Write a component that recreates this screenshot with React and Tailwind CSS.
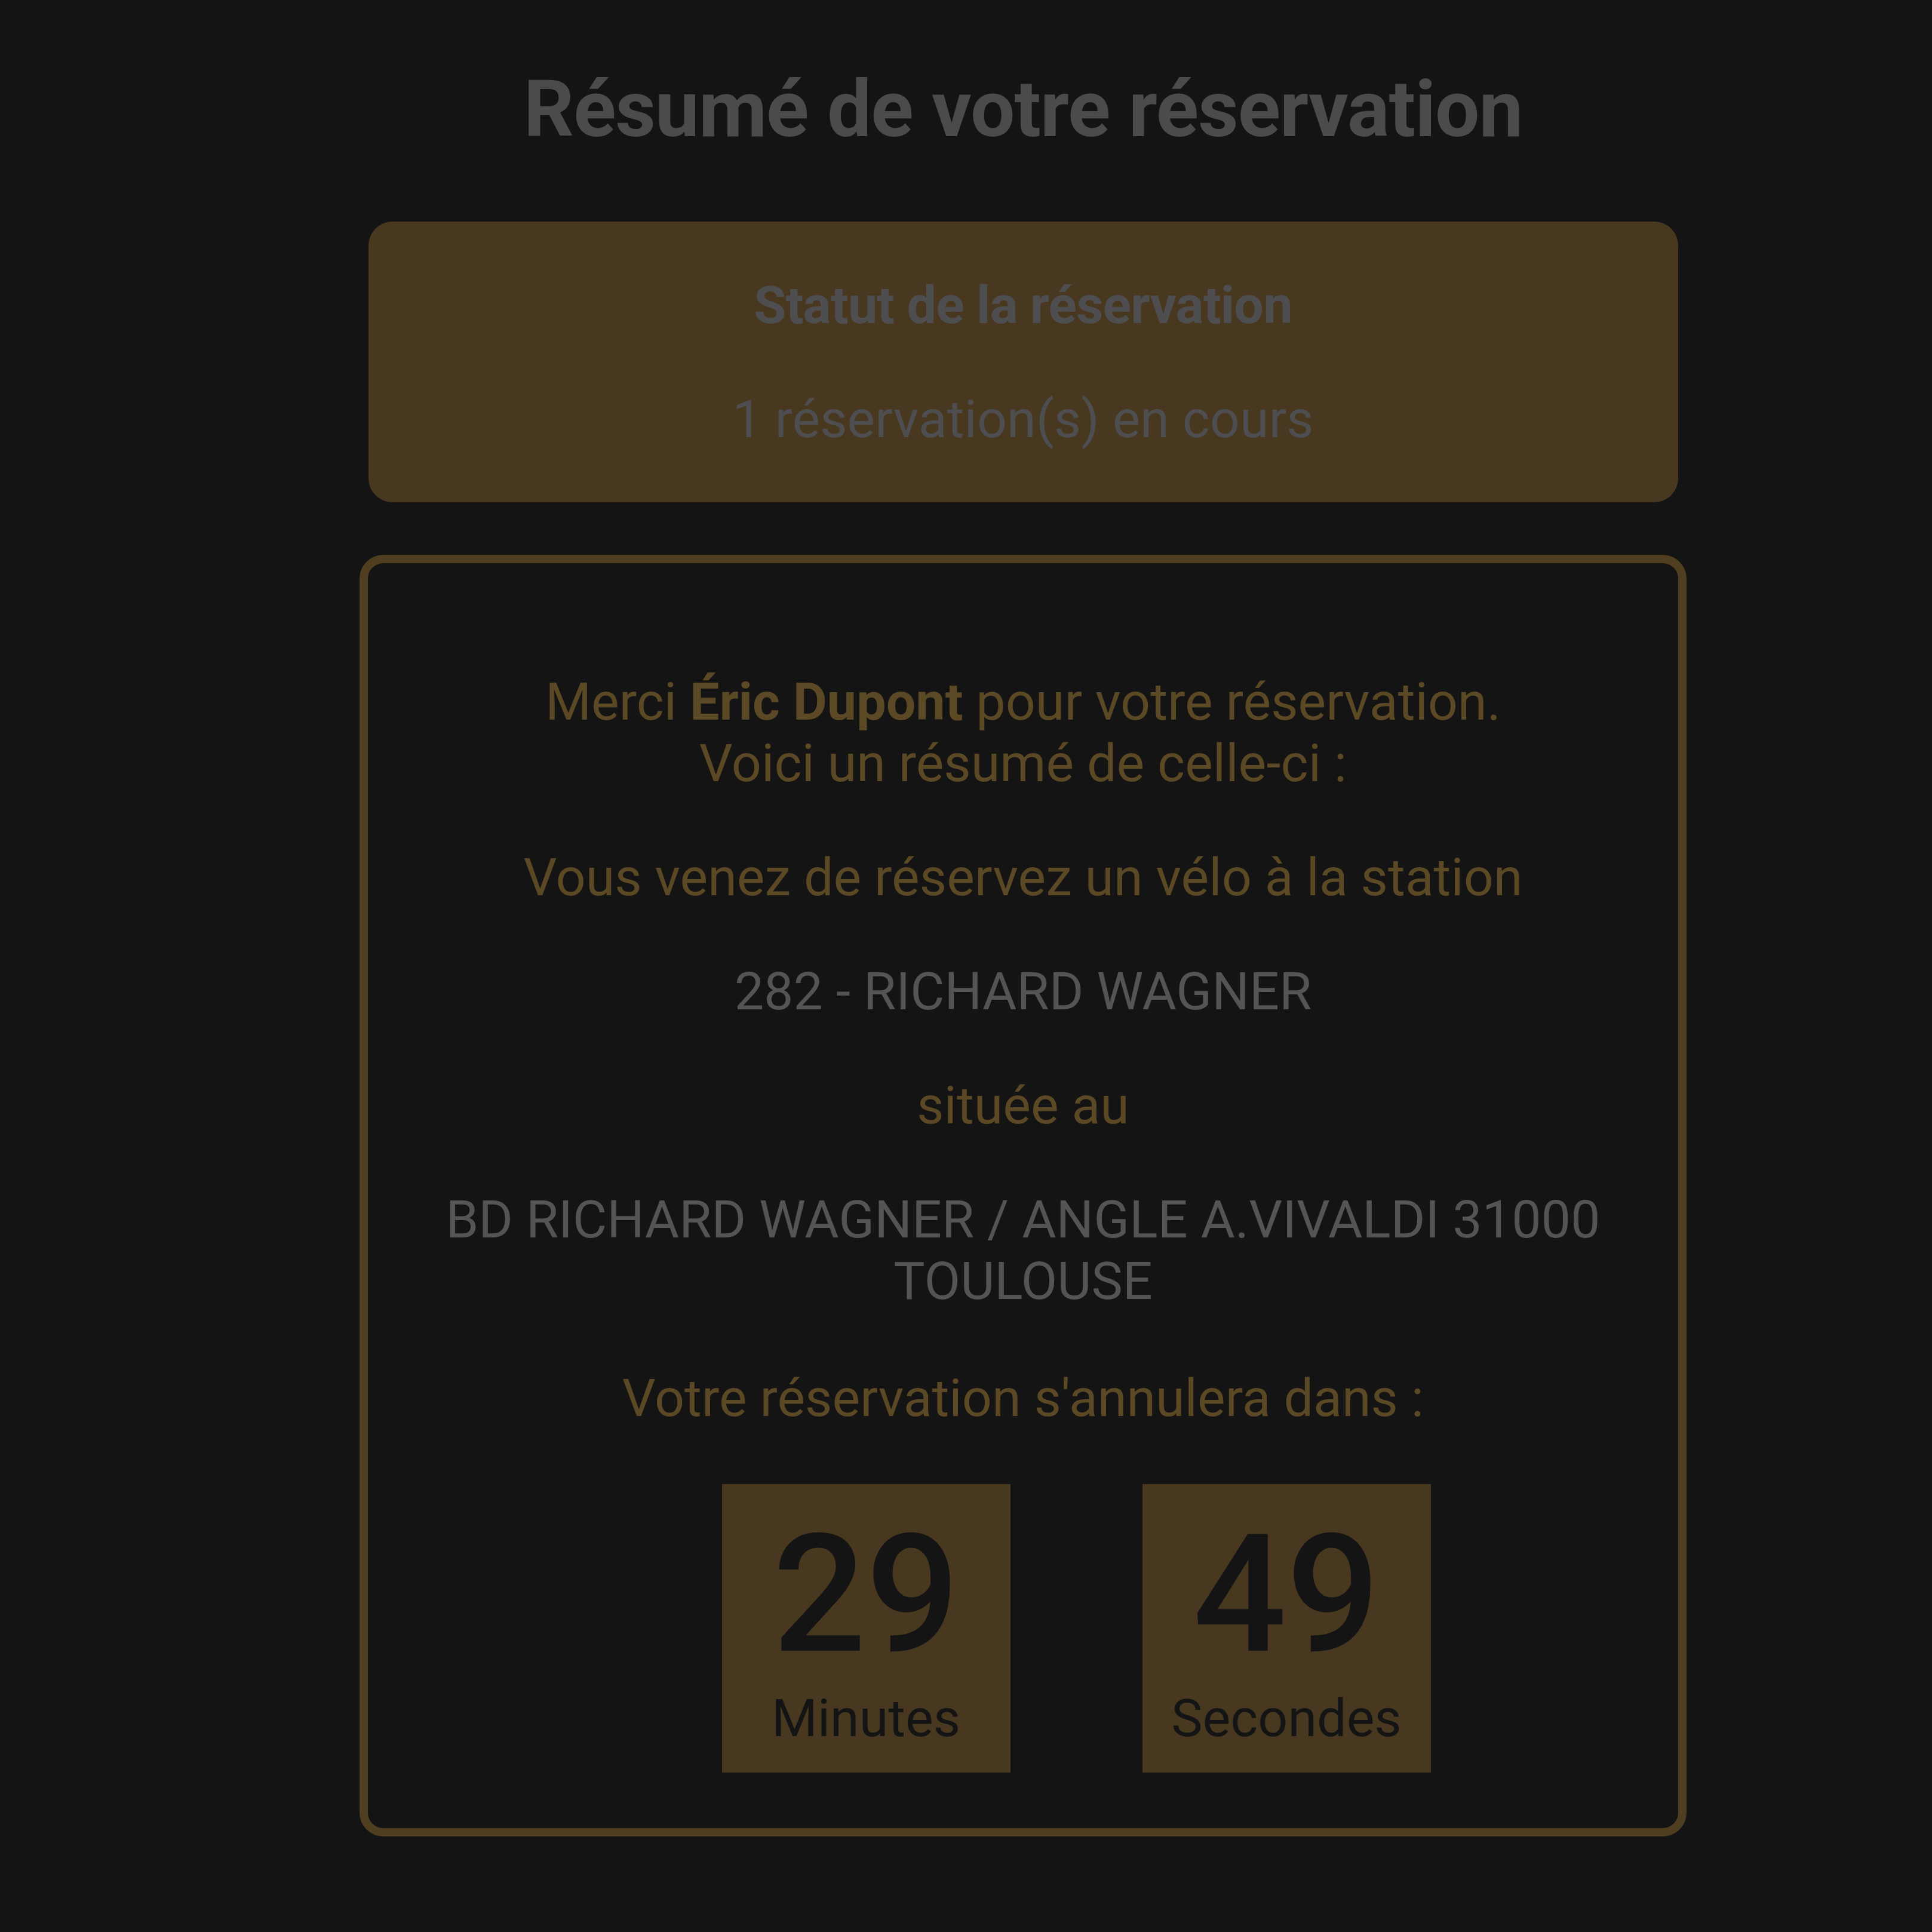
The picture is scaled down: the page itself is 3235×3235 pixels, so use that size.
export default function App() {
  return (
    <main className="min-h-[3235px] w-[3235px] bg-[#141414] pl-[602px] pt-[106px] font-['Roboto',sans-serif]">
      <div className="flex w-[2222px] flex-col items-center">
        <h1 className="text-center text-[132px] font-bold leading-[155px] tracking-[-1.1px] text-[#4b4b4b]">
          Résumé de votre réservation
        </h1>

        <section className="mt-[110px] flex w-[2193px] flex-col items-center gap-[88px] rounded-[40px] bg-[#47381f] py-[88px] text-[88px] leading-[103px] text-[#4e4e50]">
          <h2 className="font-bold tracking-[-0.8px]">Statut de la réservation</h2>
          <p>1 réservation(s) en cours</p>
        </section>

        <section className="mt-[88px] flex w-[2222px] flex-col items-center gap-[88px] rounded-[40px] border-[14px] border-[#4f3f20] px-[100px] pb-[93px] pt-[180px] text-center text-[88px] leading-[103px] text-[#5b4824]">
          <p>
            Merci <strong className="font-bold">Éric Dupont</strong> pour votre réservation.
            <br />
            Voici un résumé de celle-ci :
          </p>
          <p>Vous venez de réservez un vélo à la station</p>
          <p className="text-[#545456]">282 - RICHARD WAGNER</p>
          <p>située au</p>
          <p className="text-[#545456]">BD RICHARD WAGNER / ANGLE A.VIVALDI 31000 TOULOUSE</p>
          <p className="mt-[5px]">Votre réservation s'annulera dans :</p>

          <div className="mt-[5px] flex gap-[221px] pl-[178px]">
            <div className="flex h-[483px] w-[483px] flex-col items-center bg-[#47381f] pt-[48px] text-[#141414]">
              <span className="text-[275px] font-medium leading-none">29</span>
              <span className="mt-[17px] text-[88px] leading-[103px]">Minutes</span>
            </div>
            <div className="flex h-[483px] w-[483px] flex-col items-center bg-[#47381f] pt-[48px] text-[#141414]">
              <span className="text-[275px] font-medium leading-none">49</span>
              <span className="mt-[17px] text-[88px] leading-[103px]">Secondes</span>
            </div>
          </div>
        </section>
      </div>
    </main>
  )
}
